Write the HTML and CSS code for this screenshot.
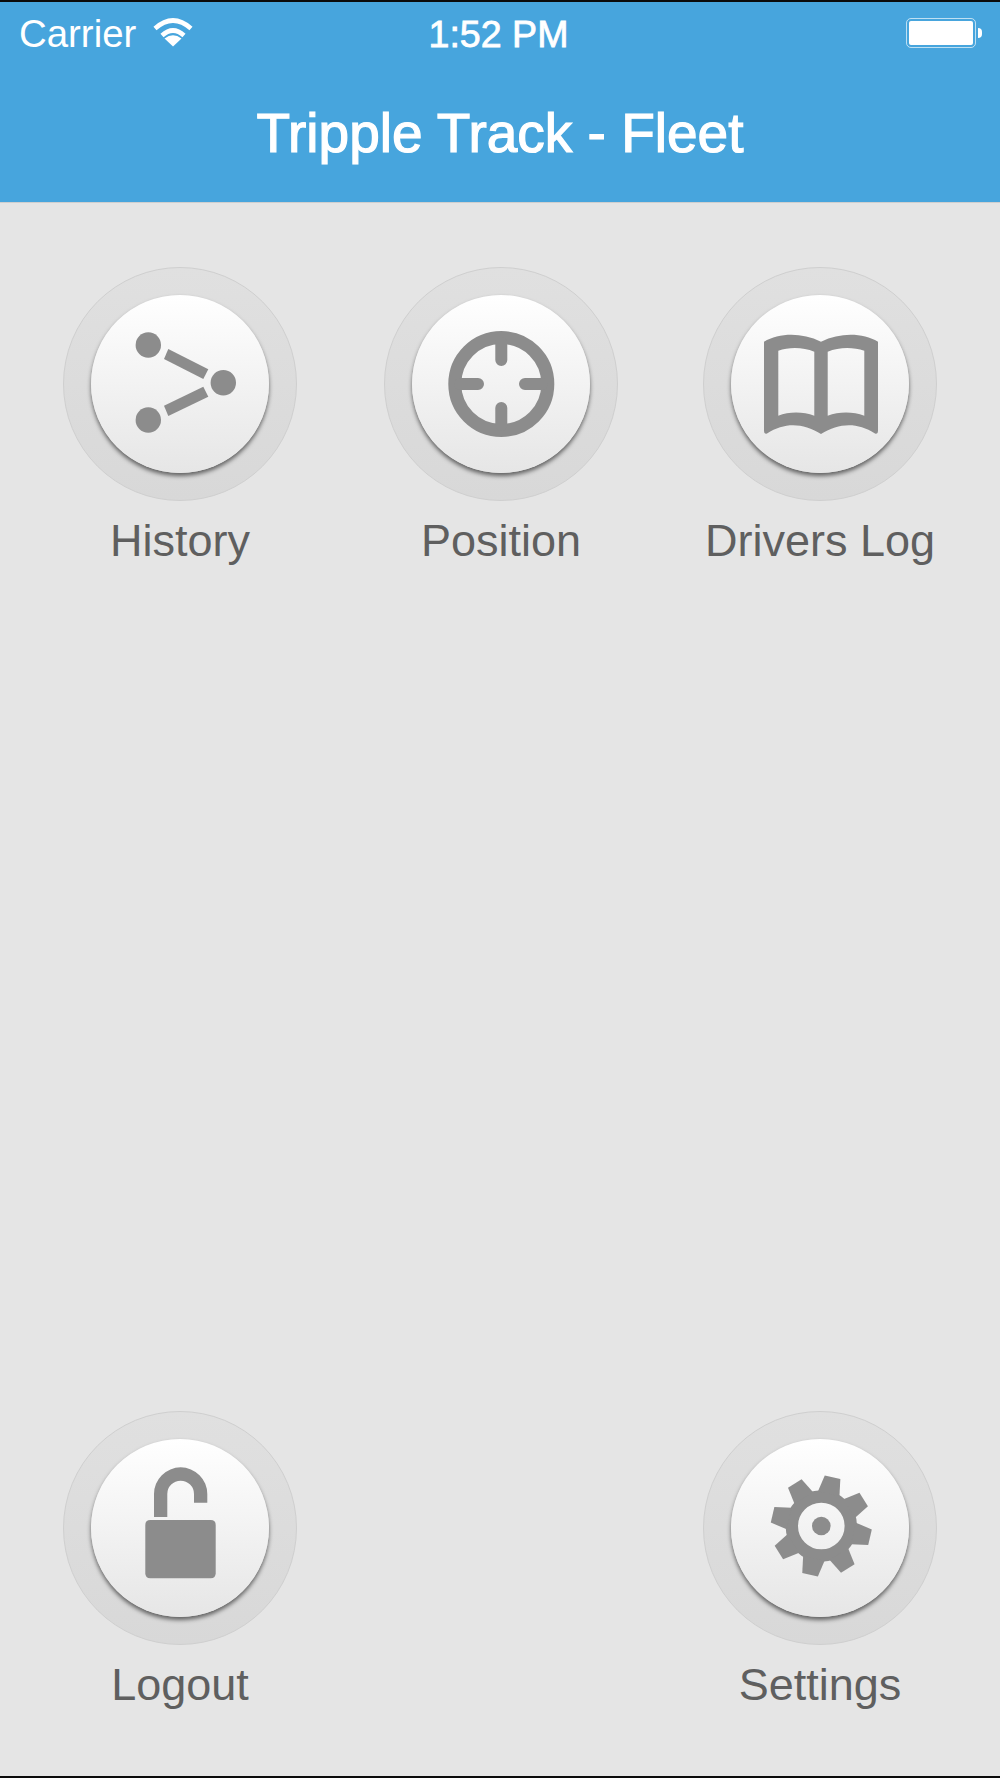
FILE: index.html
```html
<!DOCTYPE html>
<html lang="en">
<head>
<meta charset="utf-8">
<title>Tripple Track - Fleet</title>
<link rel="stylesheet" href="styles.css">
</head>
<body>
<div class="app">
  <header class="header">
    <div class="status">
      <div class="status-left">
        <span class="carrier">Carrier</span>
        <svg class="wifi" viewBox="0 0 40 29" width="40" height="29">
          <path d="M2 10.5Q20 -5.5 38 10.5" fill="none" stroke="#fff" stroke-width="4.6"/>
          <path d="M9 17.5Q20 7.5 31 17.5" fill="none" stroke="#fff" stroke-width="4.6"/>
          <path d="M20 28.5L11.5 20.5Q20 14 28.5 20.5Z" fill="#fff"/>
        </svg>
      </div>
      <span class="time">1:52 PM</span>
      <div class="battery">
        <div class="battery-body"><div class="battery-fill"></div></div>
        <div class="battery-nub"></div>
      </div>
    </div>
    <h1 class="title">Tripple Track - Fleet</h1>
  </header>
  <main class="main">
    <div class="row">
      <div class="item">
        <div class="ring"><div class="knob">
          <svg class="icon" viewBox="0 0 178 178">
            <circle cx="57.3" cy="50" r="12.7"/>
            <circle cx="132.3" cy="87.7" r="12.7"/>
            <circle cx="57.3" cy="125" r="12.7"/>
            <polygon points="77.3,54 117.3,74.3 112.3,84 73,64"/>
            <polygon points="112.3,91.7 117.3,101.7 77.3,121 73,110.7"/>
          </svg>
        </div></div>
        <span class="label">History</span>
      </div>
      <div class="item">
        <div class="ring"><div class="knob">
          <svg class="icon" viewBox="0 0 178 178">
            <circle class="line" cx="89.3" cy="89" r="46.5" stroke-width="13"/>
            <path class="line round" stroke-width="12" d="M89.3 48V65M89.3 113V130M48 89H66M113 89H130"/>
          </svg>
        </div></div>
        <span class="label">Position</span>
      </div>
      <div class="item">
        <div class="ring"><div class="knob">
          <svg class="icon" viewBox="0 0 178 178">
            <path fill-rule="evenodd" d="M33 46.7C48 38 70 37 90 46.7C110 37 132 38 147 46.7V136Q147 139.500 144 138.500C126 127 108 128 90 139C72 128 54 127 36 138.500Q33 139.500 33 136ZM47.3 55.700V120.700C58 116.500 72 116.500 83.300 120.700V56.700C72 52 58 52 47.300 55.700ZM96.700 56.700V120.700C108 116.500 122 116.500 133.300 120.700V55.700C122 52 108 52 96.700 56.700Z"/>
          </svg>
        </div></div>
        <span class="label">Drivers Log</span>
      </div>
    </div>
    <div class="row">
      <div class="item">
        <div class="ring"><div class="knob">
          <svg class="icon" viewBox="0 0 178 178">
            <path d="M63 78V55a26.65 26.65 0 0 1 53.3 0V63.7H103V55a13.35 13.35 0 0 0-26.7 0V78Z"/>
            <path d="M59.300 81H119.700Q124.700 81 124.700 86V134.300Q124.700 139.300 119.700 139.300H59.300Q54.300 139.300 54.300 134.300V86Q54.300 81 59.300 81Z"/>
          </svg>
        </div></div>
        <span class="label">Logout</span>
      </div>
      <div class="item item-last">
        <div class="ring"><div class="knob">
          <svg class="icon" viewBox="0 0 178 178">
            <g transform="translate(90.3 87)">
              <circle class="line" r="29.5" stroke-width="12.4"/>
              <circle r="9.3"/>
              <polygon transform="rotate(13)" points="-11,-33 -8,-50 8,-50 11,-33"/>
              <polygon transform="rotate(58)" points="-11,-33 -8,-50 8,-50 11,-33"/>
              <polygon transform="rotate(103)" points="-11,-33 -8,-50 8,-50 11,-33"/>
              <polygon transform="rotate(148)" points="-11,-33 -8,-50 8,-50 11,-33"/>
              <polygon transform="rotate(193)" points="-11,-33 -8,-50 8,-50 11,-33"/>
              <polygon transform="rotate(238)" points="-11,-33 -8,-50 8,-50 11,-33"/>
              <polygon transform="rotate(283)" points="-11,-33 -8,-50 8,-50 11,-33"/>
              <polygon transform="rotate(328)" points="-11,-33 -8,-50 8,-50 11,-33"/>
            </g>
          </svg>
        </div></div>
        <span class="label">Settings</span>
      </div>
    </div>
  </main>
</div>
</body>
</html>
```

FILE: styles.css
```css
* { box-sizing: border-box; }
html, body { margin: 0; padding: 0; }
body { background: #e5e5e5; font-family: "Liberation Sans", Arial, sans-serif; }

.app {
  display: flex;
  flex-direction: column;
  height: 1778px;
  border-top: 2px solid #0b0b0b;
  border-bottom: 2px solid #0b0b0b;
}

.header {
  background: #47a5dd;
  color: #fff;
  border-bottom: 1px solid #cfcfcf;
  height: 201px;
  flex: none;
}

.status {
  display: grid;
  grid-template-columns: 1fr auto 1fr;
  align-items: center;
  padding: 12px 18px 0 19px;
  height: 52px;
  font-size: 37.6px;
  line-height: 40px;
}
.status-left { display: flex; align-items: center; gap: 17px; }
.carrier { font-size: 38.4px; }
.wifi { display: block; margin-top: -4px; }
.time { margin-right: 4px; -webkit-text-stroke: 0.8px #fff; }

.battery { justify-self: end; display: flex; align-items: center; gap: 2px; margin-top: -2px; }
.battery-body {
  width: 70px;
  height: 30px;
  border: 1px solid rgba(255, 255, 255, .65);
  border-radius: 5px;
  padding: 2px;
}
.battery-fill { height: 100%; background: #fff; border-radius: 2px; }
.battery-nub { width: 4px; height: 10px; background: #fff; border-radius: 0 4px 4px 0; }

.title {
  margin: 49px 0 0;
  font-size: 55px;
  font-weight: 400;
  line-height: 60px;
  text-align: center;
  -webkit-text-stroke: 1.2px #fff;
}

.main {
  flex: 1;
  display: flex;
  flex-direction: column;
  justify-content: space-between;
  padding: 64px 63px 66px;
}

.row {
  display: grid;
  grid-template-columns: 321px 319px 234px;
}
.item { display: flex; flex-direction: column; align-items: center; width: 234px; }
.item-last { grid-column: 3; }

.ring {
  width: 234px;
  height: 234px;
  border-radius: 50%;
  border: 1px solid #cfcfcf;
  background: linear-gradient(#e0e0e0, #d8d8d8);
  display: flex;
  align-items: center;
  justify-content: center;
}
.knob {
  width: 178px;
  height: 178px;
  border-radius: 50%;
  background: linear-gradient(#fff, #e6e6e6);
  box-shadow: 0 3px 4px rgba(0, 0, 0, .55);
}
.icon { display: block; width: 178px; height: 178px; fill: #8c8c8c; }
.line { fill: none; stroke: #8c8c8c; }
.round { stroke-linecap: round; }

.label {
  margin-top: 15px;
  font-size: 45px;
  line-height: 50px;
  color: #5f5f5f;
  white-space: nowrap;
}
```
